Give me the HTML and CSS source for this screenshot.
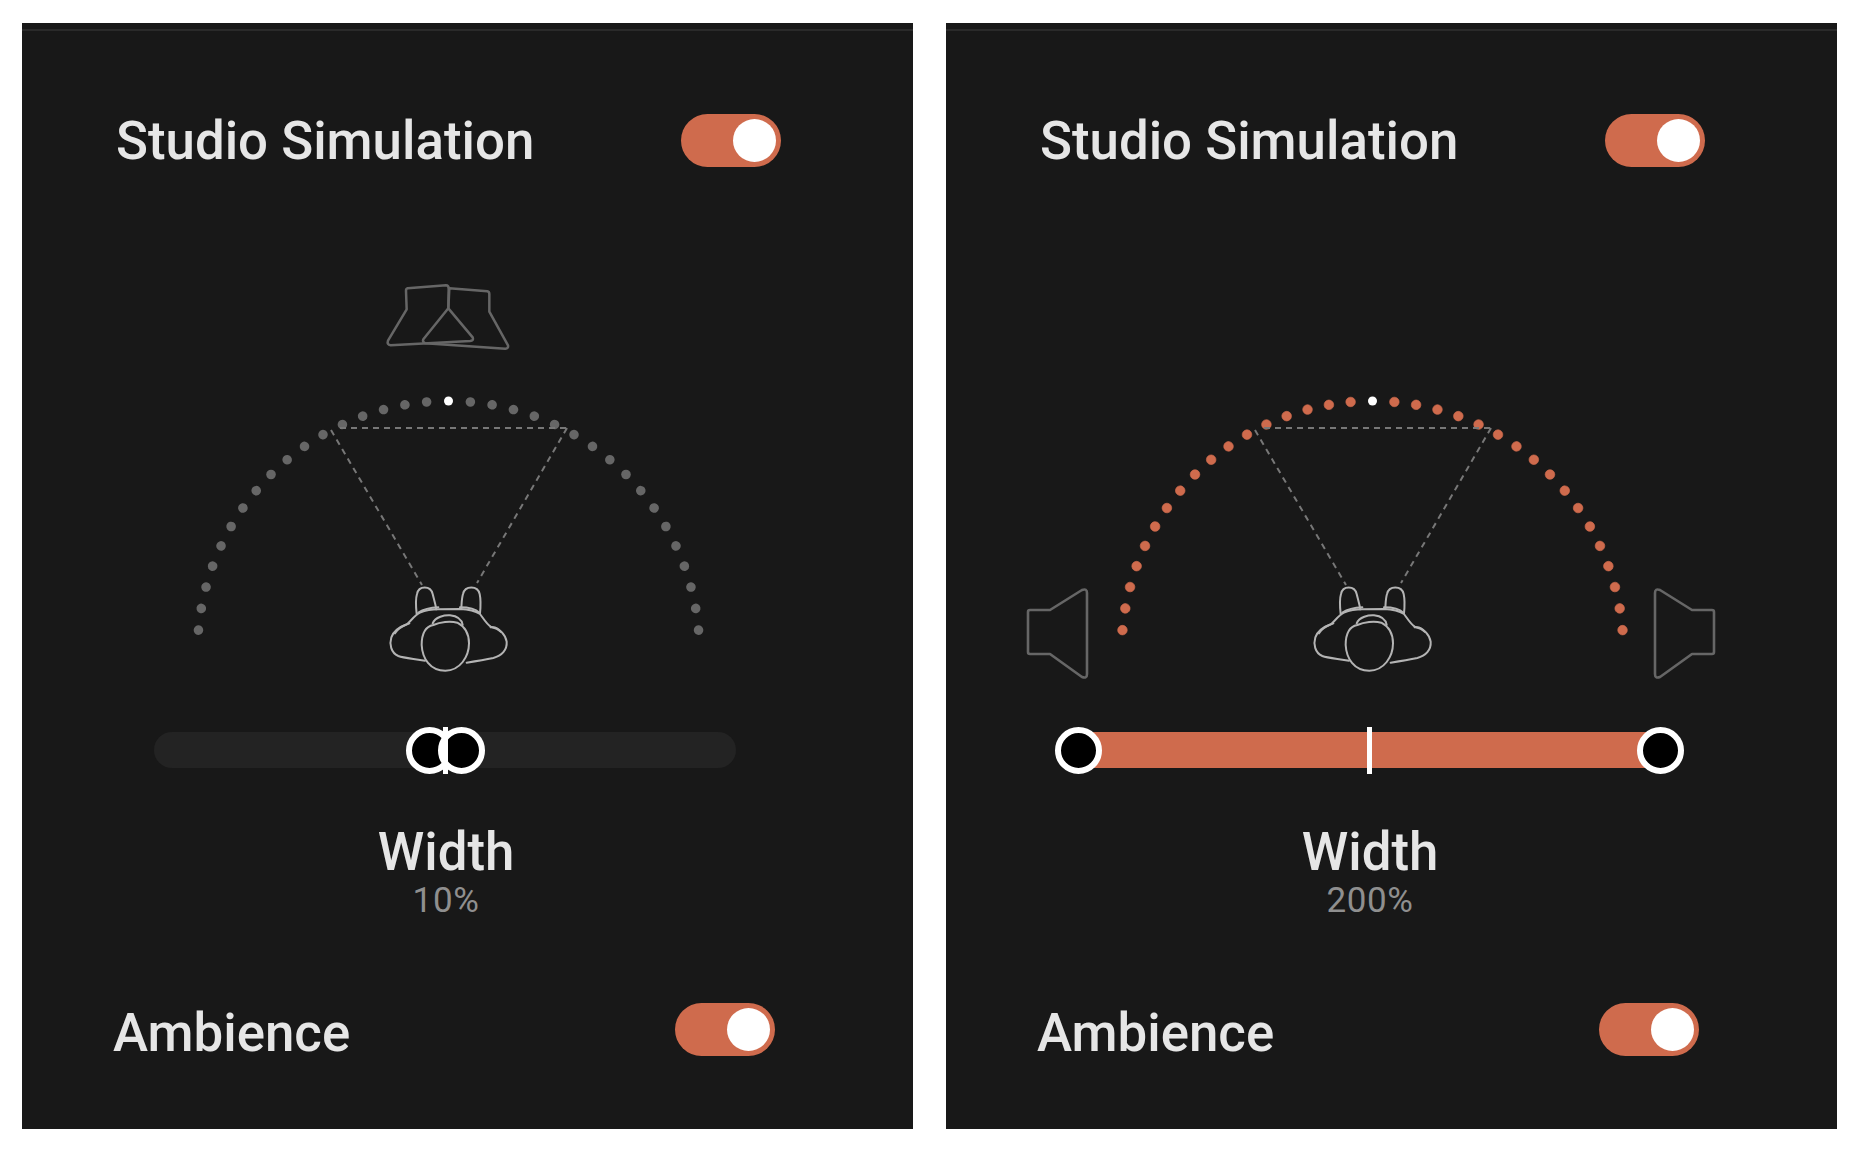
FILE: index.html
```html
<!DOCTYPE html>
<html lang="en">
<head>
<meta charset="utf-8">
<title>Studio Simulation</title>
<link rel="stylesheet" href="styles.css">
</head>
<body>
<main class="page">
  <section class="panel">
    <div class="rule"></div>
    <div class="row row-top">
      <span class="row-label">Studio Simulation</span>
      <span class="toggle"><span class="knob"></span></span>
    </div>
    <svg class="stage" viewBox="22 270 891 420" aria-hidden="true">
      <defs>
        <g id="arc">
          <circle r="4.8" cy="-251" transform="rotate(-85)"/><circle r="4.8" cy="-251" transform="rotate(-80)"/><circle r="4.8" cy="-251" transform="rotate(-75)"/><circle r="4.8" cy="-251" transform="rotate(-70)"/><circle r="4.8" cy="-251" transform="rotate(-65)"/><circle r="4.8" cy="-251" transform="rotate(-60)"/><circle r="4.8" cy="-251" transform="rotate(-55)"/><circle r="4.8" cy="-251" transform="rotate(-50)"/><circle r="4.8" cy="-251" transform="rotate(-45)"/><circle r="4.8" cy="-251" transform="rotate(-40)"/><circle r="4.8" cy="-251" transform="rotate(-35)"/><circle r="4.8" cy="-251" transform="rotate(-30)"/><circle r="4.8" cy="-251" transform="rotate(-25)"/><circle r="4.8" cy="-251" transform="rotate(-20)"/><circle r="4.8" cy="-251" transform="rotate(-15)"/><circle r="4.8" cy="-251" transform="rotate(-10)"/><circle r="4.8" cy="-251" transform="rotate(-5)"/>
          <circle r="4.8" cy="-251" transform="rotate(5)"/><circle r="4.8" cy="-251" transform="rotate(10)"/><circle r="4.8" cy="-251" transform="rotate(15)"/><circle r="4.8" cy="-251" transform="rotate(20)"/><circle r="4.8" cy="-251" transform="rotate(25)"/><circle r="4.8" cy="-251" transform="rotate(30)"/><circle r="4.8" cy="-251" transform="rotate(35)"/><circle r="4.8" cy="-251" transform="rotate(40)"/><circle r="4.8" cy="-251" transform="rotate(45)"/><circle r="4.8" cy="-251" transform="rotate(50)"/><circle r="4.8" cy="-251" transform="rotate(55)"/><circle r="4.8" cy="-251" transform="rotate(60)"/><circle r="4.8" cy="-251" transform="rotate(65)"/><circle r="4.8" cy="-251" transform="rotate(70)"/><circle r="4.8" cy="-251" transform="rotate(75)"/><circle r="4.8" cy="-251" transform="rotate(80)"/><circle r="4.8" cy="-251" transform="rotate(85)"/>
        </g>
        <g id="scene">
          <path class="sight" d="M340 428H566M331 430L422 585M567 428L477 583"/>
          <g transform="translate(370 570) scale(.33333)" class="person">
            <path d="M140 132C137 105 137 85 141 72C146 46 182 46 188 72C192 88 196 100 199 118"/>
            <path d="M274 116C275 95 275 85 279 72C285 46 323 46 329 72C333 90 332 110 330 130"/>
            <path d="M165 272C130 266 100 264 85 258C62 248 58 222 64 202C70 185 90 170 112 162C125 150 135 135 150 128C170 120 190 118 205 118L270 117C295 118 315 122 330 132C340 145 348 160 362 170C385 175 405 190 410 215C412 240 395 258 370 264C340 270 315 274 290 278"/>
            <path d="M145 128C165 115 185 113 205 112M270 112C295 112 315 115 328 128M75 190C85 172 100 168 118 160M362 172C375 170 385 175 392 185"/>
            <path d="M190 165C165 170 155 190 155 225C157 265 180 302 226 302C270 302 297 260 297 220C297 190 285 170 262 158C240 152 210 156 190 165Z"/>
            <path d="M188 160C195 140 225 135 240 136C260 138 275 148 278 165"/>
          </g>
        </g>
      </defs>
      <g transform="translate(360 260) scale(.33333)" class="speaker speaker-thick">
        <path d="M143 85L258 76Q266 76 266 86L265 145L338 232Q342 242 330 243L92 256Q80 254 84 242L140 148L138 92Q138 86 143 85Z"/>
        <path d="M268 85L382 94Q388 95 388 102V155L444 256Q446 266 436 266L196 250Q186 246 190 238L265 145Z"/>
      </g>
      <use href="#arc" class="dots-muted" transform="translate(448.5 652)"/>
      <circle class="dot-now" cx="448.5" cy="401" r="4.5"/>
      <use href="#scene"/>
    </svg>
    <div class="slider">
      <div class="track"></div>
      <span class="handle" style="left:275.5px"></span>
      <span class="handle" style="left:307.5px"></span>
      <span class="tick tick-over" style="left:291px"></span>
    </div>
    <div class="readout">
      <div class="readout-name">Width</div>
      <div class="readout-value">10%</div>
    </div>
    <div class="row row-bottom">
      <span class="row-label">Ambience</span>
      <span class="toggle"><span class="knob"></span></span>
    </div>
  </section>

  <section class="panel">
    <div class="rule"></div>
    <div class="row row-top">
      <span class="row-label">Studio Simulation</span>
      <span class="toggle"><span class="knob"></span></span>
    </div>
    <svg class="stage" viewBox="22 270 891 420" aria-hidden="true">
      <use href="#arc" class="dots-accent" transform="translate(448.5 652)"/>
      <circle class="dot-now" cx="448.5" cy="401" r="4.5"/>
      <use href="#scene"/>
      <g class="speaker">
        <path d="M106 610H126L158 590Q163 588 163 593V674Q163 679 158 677L126 654H106Q104 654 104 652V612Q104 610 106 610Z"/>
        <path d="M788 610H768L736 590Q731 588 731 593V674Q731 679 736 677L768 654H788Q790 654 790 652V612Q790 610 788 610Z"/>
      </g>
    </svg>
    <div class="slider">
      <div class="track track-on"></div>
      <span class="tick" style="left:291px"></span>
      <span class="handle" style="left:0"></span>
      <span class="handle" style="left:582px"></span>
    </div>
    <div class="readout">
      <div class="readout-name">Width</div>
      <div class="readout-value">200%</div>
    </div>
    <div class="row row-bottom">
      <span class="row-label">Ambience</span>
      <span class="toggle"><span class="knob"></span></span>
    </div>
  </section>
</main>
</body>
</html>
```
FILE: styles.css
```css
html, body {
  margin: 0;
  background: #fff;
}

.page {
  display: flex;
  gap: 33px;
  padding: 23px 15px 23px 22px;
  font-family: Roboto, "Noto Sans", sans-serif;
}

.panel {
  width: 891px;
  height: 1106px;
  flex: none;
  background: #181818;
  display: flex;
  flex-direction: column;
}

.rule {
  height: 2px;
  margin-top: 6px;
  background: #2a2a2a;
}

.row {
  display: flex;
  align-items: center;
  justify-content: space-between;
  height: 53px;
}

.row-top {
  margin-top: 83px;
  padding: 0 132px 0 94px;
}

.row-bottom {
  margin-top: 83px;
  padding: 0 138px 0 91px;
}

.row-label {
  font-size: 52.8px;
  font-weight: 500;
  line-height: 53px;
  padding-top: 2px;
  color: #e6e6e6;
}

.row-bottom .row-label {
  padding-top: 7px;
}

.toggle {
  width: 100px;
  height: 53px;
  border-radius: 27px;
  background: #cf6b4d;
  display: flex;
  align-items: center;
  justify-content: flex-end;
  padding-right: 5px;
  box-sizing: border-box;
}

.knob {
  width: 43px;
  height: 43px;
  border-radius: 50%;
  background: #fff;
}

.stage {
  display: block;
  width: 891px;
  height: 420px;
  margin-top: 103px;
}

.dots-muted { fill: #666; }
.dots-accent { fill: #cf6b4d; stroke: #cf6b4d; stroke-width: .6; }
.dot-now { fill: #fff; }

.sight {
  fill: none;
  stroke: #777;
  stroke-width: 2;
  stroke-dasharray: 6 5;
}

.person path {
  fill: none;
  stroke: #b4b4b4;
  stroke-width: 6;
  stroke-linecap: round;
  stroke-linejoin: round;
}

.speaker path {
  fill: none;
  stroke: #666;
  stroke-width: 2.6;
  stroke-linejoin: round;
}

.speaker-thick path { stroke-width: 7.5; }

.slider {
  position: relative;
  width: 582px;
  height: 36px;
  margin: 42px 0 0 132px;
}

.track {
  height: 36px;
  border-radius: 18px;
  background: #232323;
}

.track-on {
  border-radius: 0;
  background: #cf6b4d;
}

.handle {
  position: absolute;
  top: -5px;
  width: 47px;
  height: 47px;
  margin-left: -23.5px;
  box-sizing: border-box;
  border: 6px solid #fff;
  border-radius: 50%;
  background: #000;
}

.tick {
  position: absolute;
  top: -5px;
  width: 5px;
  height: 47px;
  margin-left: -2.5px;
  background: #fff;
}

.tick-over {
  margin-left: -2px;
}

.readout {
  width: 582px;
  margin: 54px 0 0 133px;
  text-align: center;
}

.readout-name {
  font-size: 52.8px;
  font-weight: 500;
  line-height: 60px;
  color: #e6e6e6;
}

.readout-value {
  font-size: 35px;
  line-height: 38px;
  color: #8f8f8f;
  letter-spacing: 0.6px;
}
```
